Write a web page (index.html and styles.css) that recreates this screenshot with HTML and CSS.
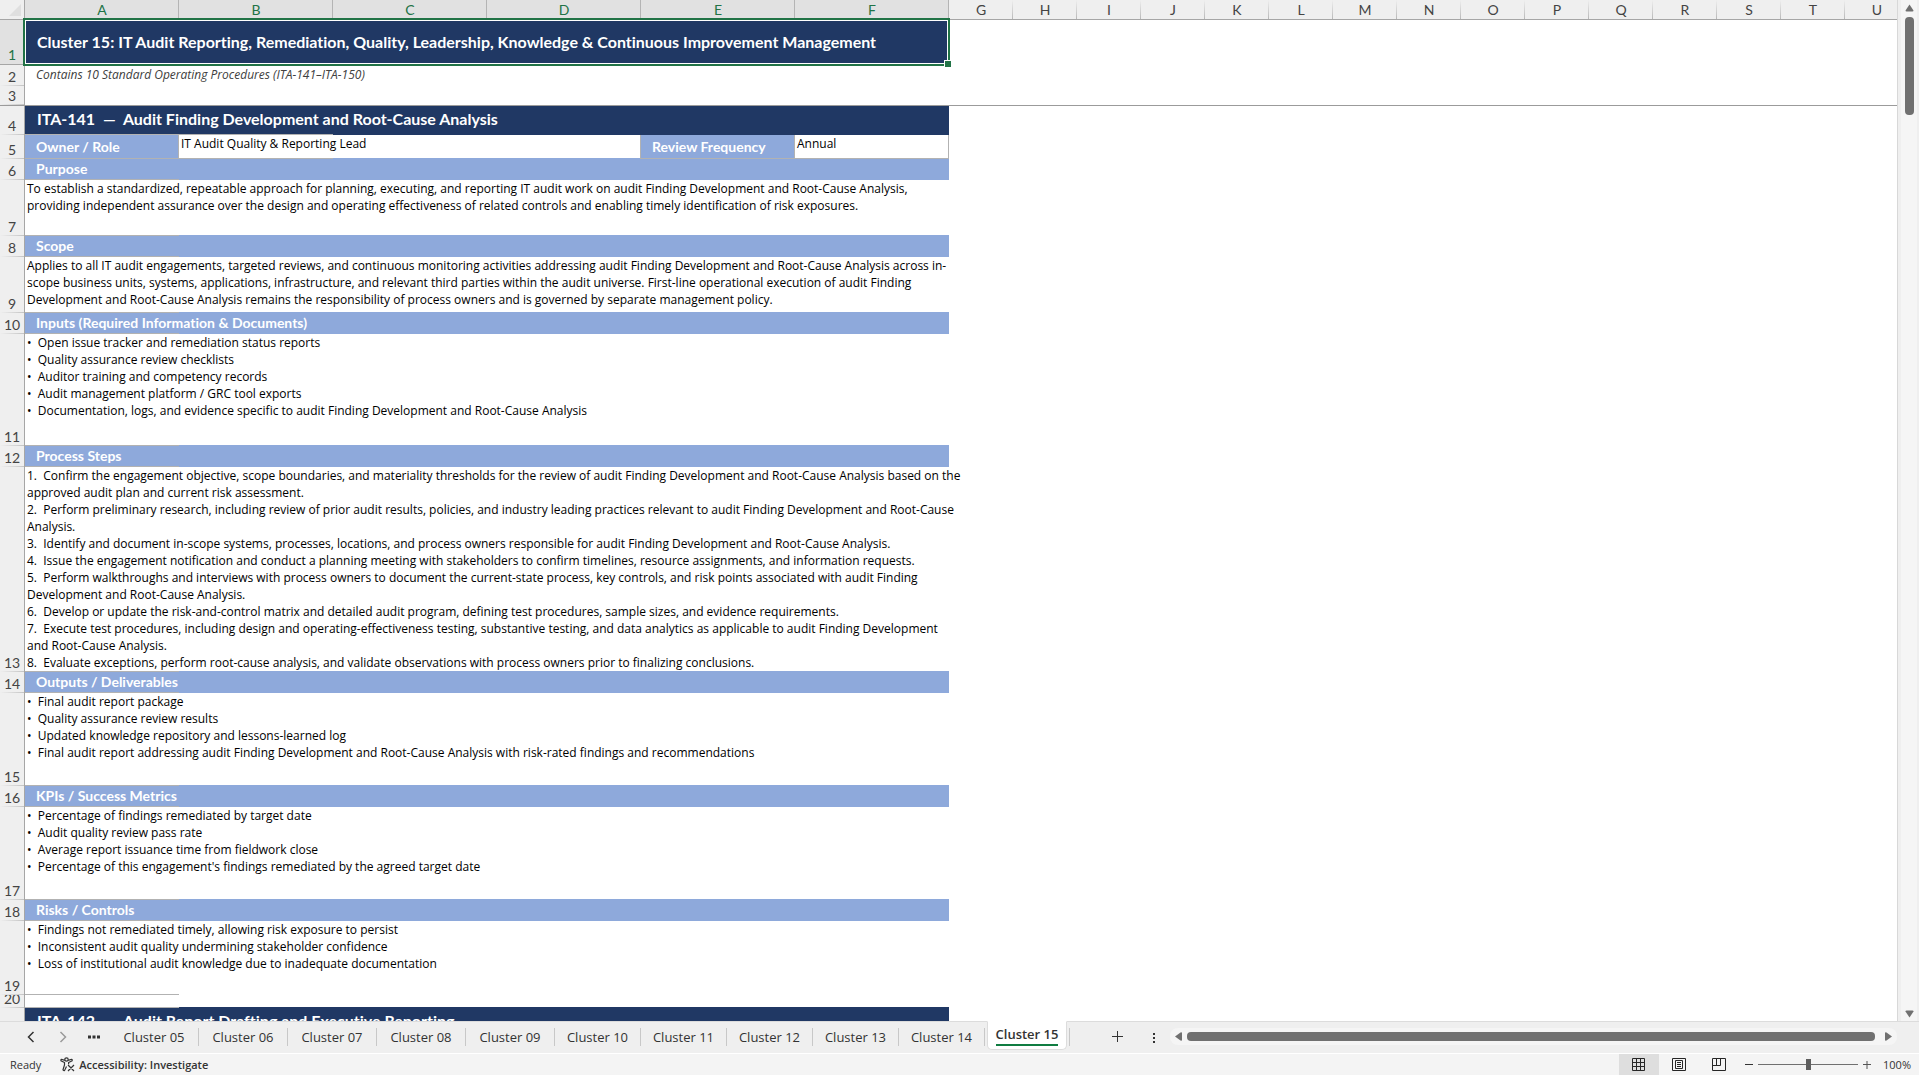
FILE: index.html
```html
<!DOCTYPE html>
<html lang="en">
<head>
    <meta charset="UTF-8">
    <meta name="viewport" content="width=device-width, initial-scale=1.0">
    <title>IT Audit SOPs - Cluster 15</title>
    <link rel="stylesheet" href="styles.css">
</head>
<body>

<main class="workspace">
    <div class="sheet">
        <table class="grid">
            <colgroup>
                <col class="col-num">
                <col class="col-wide" span="6">
                <col class="col-std" span="15">
            </colgroup>
            <thead>
                <tr class="letters">
                    <th class="corner" aria-label="Select all"><svg width="12" height="12" viewBox="0 0 12 12"><path d="M12 0v12H0z" fill="#dfdfdf"/></svg></th>
                    <th class="on">A</th><th class="on">B</th><th class="on">C</th><th class="on">D</th><th class="on">E</th><th class="on">F</th>
                    <th>G</th><th>H</th><th>I</th><th>J</th><th>K</th><th>L</th><th>M</th><th>N</th><th>O</th><th>P</th><th>Q</th><th>R</th><th>S</th><th>T</th><th>U</th>
                </tr>
            </thead>
            <tbody>
                <tr class="h-title">
                    <th scope="row" class="on">1</th>
                    <td colspan="6" class="title">Cluster 15: IT Audit Reporting, Remediation, Quality, Leadership, Knowledge &amp; Continuous Improvement Management<span class="selection"></span></td>
                    <td colspan="15"></td>
                </tr>
                <tr class="h-section">
                    <th scope="row">2</th>
                    <td colspan="6" class="subtitle">Contains 10 Standard Operating Procedures (ITA-141–ITA-150)</td>
                    <td colspan="15"></td>
                </tr>
                <tr class="h-blank frozen">
                    <th scope="row">3</th>
                    <td colspan="21"></td>
                </tr>
                <tr class="h-sop">
                    <th scope="row">4</th>
                    <td colspan="6" class="sop">ITA-141  —  Audit Finding Development and Root-Cause Analysis</td>
                    <td colspan="15"></td>
                </tr>
                <tr class="h-meta">
                    <th scope="row">5</th>
                    <td class="label edge">Owner / Role</td>
                    <td colspan="3" class="value owner">IT Audit Quality &amp; Reporting Lead</td>
                    <td class="label edge">Review Frequency</td>
                    <td class="value edge">Annual</td>
                    <td colspan="15"></td>
                </tr>
                <tr class="h-section">
                    <th scope="row">6</th>
                    <td colspan="6" class="section">Purpose</td>
                    <td colspan="15"></td>
                </tr>
                <tr class="h-para">
                    <th scope="row">7</th>
                    <td colspan="6" class="text">To establish a standardized, repeatable approach for planning, executing, and reporting IT audit work on audit Finding Development and Root-Cause Analysis,
providing independent assurance over the design and operating effectiveness of related controls and enabling timely identification of risk exposures.</td>
                    <td colspan="15"></td>
                </tr>
                <tr class="h-section">
                    <th scope="row">8</th>
                    <td colspan="6" class="section">Scope</td>
                    <td colspan="15"></td>
                </tr>
                <tr class="h-para">
                    <th scope="row">9</th>
                    <td colspan="6" class="text">Applies to all IT audit engagements, targeted reviews, and continuous monitoring activities addressing audit Finding Development and Root-Cause Analysis across in-
scope business units, systems, applications, infrastructure, and relevant third parties within the audit universe. First-line operational execution of audit Finding
Development and Root-Cause Analysis remains the responsibility of process owners and is governed by separate management policy.</td>
                    <td colspan="15"></td>
                </tr>
                <tr class="h-section">
                    <th scope="row">10</th>
                    <td colspan="6" class="section">Inputs (Required Information &amp; Documents)</td>
                    <td colspan="15"></td>
                </tr>
                <tr class="h-inputs">
                    <th scope="row">11</th>
                    <td colspan="6" class="text">•  Open issue tracker and remediation status reports
•  Quality assurance review checklists
•  Auditor training and competency records
•  Audit management platform / GRC tool exports
•  Documentation, logs, and evidence specific to audit Finding Development and Root-Cause Analysis</td>
                    <td colspan="15"></td>
                </tr>
                <tr class="h-section">
                    <th scope="row">12</th>
                    <td colspan="6" class="section">Process Steps</td>
                    <td colspan="15"></td>
                </tr>
                <tr class="h-steps">
                    <th scope="row">13</th>
                    <td colspan="6" class="text">1.  Confirm the engagement objective, scope boundaries, and materiality thresholds for the review of audit Finding Development and Root-Cause Analysis based on the
approved audit plan and current risk assessment.
2.  Perform preliminary research, including review of prior audit results, policies, and industry leading practices relevant to audit Finding Development and Root-Cause
Analysis.
3.  Identify and document in-scope systems, processes, locations, and process owners responsible for audit Finding Development and Root-Cause Analysis.
4.  Issue the engagement notification and conduct a planning meeting with stakeholders to confirm timelines, resource assignments, and information requests.
5.  Perform walkthroughs and interviews with process owners to document the current-state process, key controls, and risk points associated with audit Finding
Development and Root-Cause Analysis.
6.  Develop or update the risk-and-control matrix and detailed audit program, defining test procedures, sample sizes, and evidence requirements.
7.  Execute test procedures, including design and operating-effectiveness testing, substantive testing, and data analytics as applicable to audit Finding Development
and Root-Cause Analysis.
8.  Evaluate exceptions, perform root-cause analysis, and validate observations with process owners prior to finalizing conclusions.</td>
                    <td colspan="15"></td>
                </tr>
                <tr class="h-section">
                    <th scope="row">14</th>
                    <td colspan="6" class="section">Outputs / Deliverables</td>
                    <td colspan="15"></td>
                </tr>
                <tr class="h-list">
                    <th scope="row">15</th>
                    <td colspan="6" class="text">•  Final audit report package
•  Quality assurance review results
•  Updated knowledge repository and lessons-learned log
•  Final audit report addressing audit Finding Development and Root-Cause Analysis with risk-rated findings and recommendations</td>
                    <td colspan="15"></td>
                </tr>
                <tr class="h-section">
                    <th scope="row">16</th>
                    <td colspan="6" class="section">KPIs / Success Metrics</td>
                    <td colspan="15"></td>
                </tr>
                <tr class="h-list">
                    <th scope="row">17</th>
                    <td colspan="6" class="text">•  Percentage of findings remediated by target date
•  Audit quality review pass rate
•  Average report issuance time from fieldwork close
•  Percentage of this engagement's findings remediated by the agreed target date</td>
                    <td colspan="15"></td>
                </tr>
                <tr class="h-section">
                    <th scope="row">18</th>
                    <td colspan="6" class="section">Risks / Controls</td>
                    <td colspan="15"></td>
                </tr>
                <tr class="h-risks">
                    <th scope="row">19</th>
                    <td colspan="6" class="text last">•  Findings not remediated timely, allowing risk exposure to persist
•  Inconsistent audit quality undermining stakeholder confidence
•  Loss of institutional audit knowledge due to inadequate documentation</td>
                    <td colspan="15"></td>
                </tr>
                <tr class="h-gap">
                    <th scope="row"><div class="squeezed">20</div></th>
                    <td colspan="6" class="gap"></td>
                    <td colspan="15"></td>
                </tr>
                <tr class="h-sop">
                    <th scope="row"></th>
                    <td colspan="6" class="sop">ITA-142  —  Audit Report Drafting and Executive Reporting</td>
                    <td colspan="15"></td>
                </tr>
            </tbody>
        </table>
    </div>
    <div class="vscroll">
        <svg width="9" height="8" viewBox="0 0 9 8"><path d="M4.5 0.500L8.500 6.500Q8.500 7.500 7.500 7.500H1.500Q0.500 7.500 0.500 6.500z" fill="#707070"/></svg>
        <div class="vthumb"></div>
        <svg class="down" width="9" height="8" viewBox="0 0 9 8"><path d="M4.500 7.500L8.500 1.500Q8.500 0.500 7.500 0.500H1.500Q0.500 0.500 0.500 1.500z" fill="#707070"/></svg>
    </div>
</main>

<div class="tabbar">
    <div class="tab-nav">
        <button aria-label="Previous sheets"><svg width="8" height="12" viewBox="0 0 8 12"><path d="M6.500 1L1.500 6l5 5" fill="none" stroke="#333" stroke-width="1.500"/></svg></button>
        <button aria-label="Next sheets"><svg width="8" height="12" viewBox="0 0 8 12"><path d="M1.500 1l5 5-5 5" fill="none" stroke="#9a9a9a" stroke-width="1.500"/></svg></button>
        <button aria-label="More sheets"><svg width="12" height="4" viewBox="0 0 12 4"><path d="M0 0.500h3v3H0zM4.500 0.500h3v3h-3zM9 0.500h3v3H9z" fill="#333"/></svg></button>
    </div>
    <nav class="tabs">
        <a href="#" class="roomy">Cluster 05</a>
        <a href="#" class="roomy">Cluster 06</a>
        <a href="#" class="roomy">Cluster 07</a>
        <a href="#" class="roomy">Cluster 08</a>
        <a href="#" class="roomy">Cluster 09</a>
        <a href="#">Cluster 10</a>
        <a href="#">Cluster 11</a>
        <a href="#">Cluster 12</a>
        <a href="#">Cluster 13</a>
        <a href="#">Cluster 14</a>
        <a href="#" class="active"><span>Cluster 15</span></a>
        <i class="tab-end"></i>
    </nav>
    <button class="add" aria-label="New sheet"><svg width="11" height="11" viewBox="0 0 11 11"><path d="M5 0h1v5h5v1H6v5H5V6H0V5h5z" fill="#333"/></svg></button>
    <div class="splitter"><svg width="2" height="10" viewBox="0 0 2 10"><path d="M0 0h2v2H0zM0 4h2v2H0zM0 8h2v2H0z" fill="#333"/></svg></div>
    <div class="hscroll">
        <svg width="7" height="9" viewBox="0 0 7 9"><path d="M0 4.500L5.500 0.500Q7 0 7 1v7Q7 9 5.500 8.500z" fill="#707070"/></svg>
        <div class="hthumb"></div>
        <svg width="7" height="9" viewBox="0 0 7 9"><path d="M7 4.500L1.500 0.500Q0 0 0 1v7Q0 9 1.500 8.500z" fill="#707070"/></svg>
    </div>
</div>

<footer class="status">
    <span class="ready">Ready</span>
    <button class="access">
        <svg width="15" height="15" viewBox="0 0 15 15" fill="none" stroke="#333" stroke-width="1.200"><circle cx="6.500" cy="2.500" r="1.700"/><path d="M4.800 3.400L1.600 2.300Q0.600 2.600 1 3.700L4.500 5.500V8L3 12.800Q3.600 14 4.600 13.400L6.500 9.500M8.200 3.400L11.500 2.300Q12.600 2.600 12.100 3.700L8.600 5.500V7.200M8 8l6 6M14 8l-6 6"/></svg>
        Accessibility: Investigate
    </button>
    <div class="views">
        <button class="current" aria-label="Normal view"><svg width="14" height="14" viewBox="0 0 14 14" fill="none" stroke="#262626"><path d="M0.500 0.500h12v12h-12zM4.500 0.500v12M8.500 0.500v12M0.500 4.500h12M0.500 8.500h12"/></svg></button>
        <button aria-label="Page layout"><svg width="14" height="14" viewBox="0 0 14 14" fill="none" stroke="#262626"><path d="M0.500 0.500h13v12h-13zM3.500 2.500h7v8h-7zM5 4.500h4M5 6.500h4M5 8.500h4"/></svg></button>
        <button aria-label="Page break preview"><svg width="14" height="14" viewBox="0 0 14 14" fill="none" stroke="#262626"><path d="M0.500 0.500h13v12h-13zM4.500 0.500v7M0.500 7.500h8M8.500 0.500v7"/></svg></button>
    </div>
    <div class="zoom">
        <button aria-label="Zoom out"><svg width="8" height="8" viewBox="0 0 8 8"><path d="M0 3h8v1H0z" fill="#333"/></svg></button>
        <input type="range" min="0" max="100" value="50" aria-label="Zoom">
        <button aria-label="Zoom in"><svg width="8" height="8" viewBox="0 0 8 8"><path d="M0 3h8v1H0zM3.500 0h1v8h-1z" fill="#555"/></svg></button>
        <button class="percent">100%</button>
    </div>
</footer>

</body>
</html>
```
FILE: styles.css
```css
* {
    box-sizing: border-box;
}
body {
    margin: 0;
    height: 100vh;
    display: flex;
    flex-direction: column;
    overflow: hidden;
    background: #efefef;
    color: #333;
    font-family: "Open Sans", sans-serif;
    font-size: 11px;
}
button {
    display: flex;
    align-items: center;
    justify-content: center;
    padding: 0;
    border: none;
    background: none;
    color: inherit;
    font: inherit;
    cursor: pointer;
}
svg {
    display: block;
    flex: none;
}

/* sheet */
.workspace {
    flex: 1;
    min-height: 0;
    display: flex;
}
.sheet {
    flex: 1;
    min-width: 0;
    overflow: hidden;
    background: white;
}
/* fixed layout with a tiny width: the columns alone decide how wide it gets */
.grid {
    table-layout: fixed;
    width: 1px;
    border-collapse: separate;
    border-spacing: 0;
    font-family: Lato, sans-serif;
    font-variant-ligatures: none;
}
.col-num {
    width: 25px;
}
.col-wide {
    width: 154px;
}
.col-std {
    width: 64px;
}
.grid th,
.grid td {
    padding: 0;
}
.grid th {
    font-size: 14px;
    font-weight: normal;
    color: #444;
}
.letters th {
    height: 20px;
    line-height: 19px;
    background: linear-gradient(#efefef, #b8b8b8) right / 1px 100% no-repeat #efefef;
    border-bottom: 1px solid #a6a6a6;
}
.letters th.on {
    background: linear-gradient(#b4b4b4, #b4b4b4) right / 1px 100% no-repeat #e1e1e1;
}
.grid th.on {
    color: #217346;
}
.letters .corner {
    background: #efefef;
    border-right: 1px solid #a6a6a6;
}
.corner svg {
    margin-left: 9px;
}
.grid tbody th {
    padding-bottom: 1px;
    vertical-align: bottom;
    line-height: 17px;
    background: linear-gradient(to right, #efefef, #c4c4c4) bottom / 100% 1px no-repeat #efefef;
    border-right: 1px solid #a6a6a6;
}
.grid tbody th.on {
    background: #e1e1e1;
    border-bottom: 1px solid #a6a6a6;
}

.h-title { height: 45px; }
.h-section { height: 21px; }
.h-blank { height: 20px; }
.h-sop { height: 29px; }
.h-meta { height: 24px; }
.h-para { height: 56px; }
.h-inputs { height: 112px; }
.h-steps { height: 205px; }
.h-list { height: 93px; }
.h-risks { height: 74px; }
.h-gap { height: 13px; }

.grid .frozen th,
.grid .frozen td {
    border-bottom: 1px solid #9b9b9b;
}
.grid .title,
.grid .sop,
.grid .section,
.grid .label,
.grid .subtitle {
    padding-left: 11px;
    white-space: pre;
    color: white;
    font-weight: bold;
}
.grid .title {
    position: relative;
    padding: 0 0 3px 12px;
    background: #203864;
    font-size: 16px;
}
.selection {
    position: absolute;
    top: -2px;
    right: -1px;
    bottom: -1px;
    left: -2px;
    border: 2px solid #217346;
    box-shadow: inset 0 0 0 1px white;
}
.selection::after {
    content: "";
    position: absolute;
    right: -3px;
    bottom: -3px;
    width: 6px;
    height: 6px;
    background: #217346;
    outline: 1px solid white;
}
.grid .subtitle {
    vertical-align: top;
    line-height: 19px;
    color: #404040;
    font-family: "Open Sans", sans-serif;
    font-size: 12px;
    font-weight: normal;
    font-style: italic;
}
.grid .sop {
    padding: 0 0 3px 12px;
    line-height: 24px;
    background: linear-gradient(#b2b2b2, #b2b2b2) left bottom / 308px 1px no-repeat #203864;
    font-size: 16px;
}
.grid .section {
    padding-bottom: 2px;
    line-height: 18px;
    background: linear-gradient(#b2b2b2, #b2b2b2) left bottom / 154px 1px no-repeat #8ea9db;
    font-size: 14px;
}
.grid .label {
    background: #8ea9db;
    font-size: 14px;
}
.grid .edge {
    border-right: 1px solid #b2b2b2;
    border-bottom: 1px solid #b2b2b2;
}
.grid .value,
.grid .text {
    padding-left: 2px;
    vertical-align: top;
    line-height: 17px;
    white-space: pre;
    color: black;
    font-family: "Open Sans", sans-serif;
    font-size: 12px;
}
.grid .owner {
    border-right: 1px solid #b2b2b2;
    background: linear-gradient(#b2b2b2, #b2b2b2) left bottom / 154px 1px no-repeat, linear-gradient(#8ea9db, #8ea9db) left bottom / 100% 1px no-repeat;
}
.grid .text {
    background: linear-gradient(#b2b2b2, #b2b2b2) left bottom / 154px 1px no-repeat, linear-gradient(#8ea9db, #8ea9db) left bottom / 100% 1px no-repeat;
}
.grid .text.last {
    background: linear-gradient(#b2b2b2, #b2b2b2) left bottom / 154px 1px no-repeat;
}
.grid .gap {
    background: linear-gradient(#b2b2b2, #b2b2b2) left bottom / 154px 1px no-repeat, linear-gradient(#203864, #203864) left bottom / 100% 1px no-repeat;
}
.squeezed {
    height: 12px;
    line-height: 8px;
    overflow: hidden;
}

/* scroll bars */
.vscroll {
    width: 22px;
    padding: 4px 2px 3px 3px;
    display: flex;
    flex-direction: column;
    align-items: center;
    gap: 5px;
    border-left: 1px solid #d8d8d8;
    background: linear-gradient(#f5f5f5, #f5f5f5) 3px 0 / 16px 100% no-repeat;
}
.vthumb {
    width: 9px;
    height: 98px;
    border-radius: 4px;
    background: #707070;
}
.down {
    margin-top: auto;
}
.hscroll {
    flex: 1;
    height: 17px;
    padding: 0 5px;
    display: flex;
    align-items: center;
    gap: 5px;
    border-radius: 8px;
    background: #f5f5f5;
}
.hthumb {
    flex: 1;
    height: 9px;
    margin-right: 5px;
    border-radius: 4px;
    background: #707070;
}

/* sheet tabs */
.tabbar {
    height: 33px;
    padding: 0 22px 2px 0;
    display: flex;
    align-items: center;
    border-top: 1px solid #dcdcdc;
    border-bottom: 1px solid white;
}
.tab-nav {
    display: flex;
    width: 110px;
    padding-left: 15px;
}
.tab-nav button {
    width: 32px;
    height: 24px;
}
.tabs {
    display: flex;
    align-items: center;
    align-self: stretch;
    font-size: 13px;
}
.tabs a {
    width: 86px;
    height: 18px;
    line-height: 18px;
    border-right: 1px solid #c8c8c8;
    text-align: center;
    color: #333;
    text-decoration: none;
}
.tabs .roomy {
    width: 89px;
}
.tabs .active {
    width: 80px;
    height: 29px;
    margin: -1px 0 0 2px;
    align-self: flex-start;
    border: 1px solid #dcdcdc;
    border-top: 1px solid white;
    border-radius: 0 0 5px 5px;
    background: white;
    font-weight: 600;
}
.tabs .active span {
    display: inline-block;
    height: 24px;
    line-height: 25px;
    border-bottom: 2px solid #107c41;
}
.tab-end {
    width: 1px;
    height: 18px;
    margin-left: 2px;
    background: #c8c8c8;
}
.add {
    width: 32px;
    height: 24px;
    margin-left: 31px;
}
.splitter {
    padding: 2px 15px 0 20px;
}

/* status bar */
.status {
    height: 21px;
    padding: 0 8px 0 10px;
    display: flex;
    align-items: center;
    background: #f4f4f4;
}
.access {
    gap: 4px;
    margin-left: 19px;
    font-weight: 600;
}
.views {
    display: flex;
    align-self: stretch;
    margin-left: auto;
}
.views button {
    width: 40px;
}
.views .current {
    background: #dedede;
}
.zoom {
    display: flex;
    align-items: center;
    gap: 5px;
    margin-left: 6px;
}
.zoom input {
    appearance: none;
    width: 100px;
    height: 11px;
    margin: 0;
    background: linear-gradient(#707070, #707070) center / 100% 1px no-repeat;
}
.zoom input::-webkit-slider-thumb {
    appearance: none;
    width: 5px;
    height: 11px;
    background: #5e5e5e;
}
.percent {
    margin-left: 7px;
}
```
